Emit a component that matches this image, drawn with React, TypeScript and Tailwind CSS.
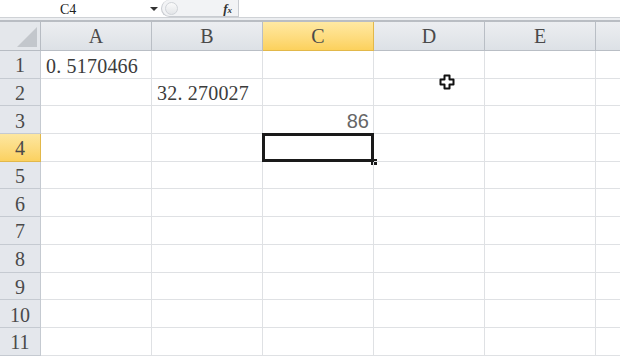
import React from "react";

const cols = ["A", "B", "C", "D", "E", ""];
const rows = [1, 2, 3, 4, 5, 6, 7, 8, 9, 10, 11];

// cell contents keyed by "col-row"
const data: Record<string, { text: string; align: "left" | "right"; sans?: boolean }> = {
  "A-1": { text: "0. 5170466", align: "left" },
  "B-2": { text: "32. 270027", align: "left" },
  "C-3": { text: "86", align: "right", sans: true },
};

function CellCursor() {
  return (
    <svg width="16" height="16" viewBox="0 0 16 16" className="absolute left-[439px] top-[74px]">
      <path
        d="M5.5 1.5h5v4h4v5h-4v4h-5v-4h-4v-5h4z"
        fill="#fff"
        stroke="#111"
        strokeWidth="2"
        strokeLinejoin="round"
      />
    </svg>
  );
}

export default function App() {
  return (
    <main className="relative w-[620px] h-[357px] overflow-hidden bg-white font-['Liberation_Serif',serif]">
      {/* Formula bar */}
      <div className="flex h-[17px] items-center bg-white">
        <div className="w-[148px] pl-[60px] text-[14px] leading-none text-[#222] pt-[3px]">C4</div>
        <div className="w-[12px] flex items-center justify-center">
          <div className="w-0 h-0 border-l-[4px] border-r-[4px] border-t-[4px] border-l-transparent border-r-transparent border-t-[#333]" />
        </div>
        <div className="ml-[1px] flex h-[17px] w-[77px] items-center rounded-l-full border-l border-b border-[#c9ccd1] bg-[#f2f3f5]">
          <div className="ml-[3px] h-[13px] w-[13px] rounded-full border border-[#d0d3d8] bg-gradient-to-b from-[#fafafa] to-[#e3e5e8]" />
          <span className="ml-auto mr-[6px] italic font-bold text-[13px] leading-none text-[#333]">
            f<span className="text-[9px]">x</span>
          </span>
        </div>
        <div className="h-full border-l border-[#c9ccd1] flex-1 bg-white" />
      </div>
      <div className="h-[5px] border-t border-[#cfd2d6] border-b-2 border-b-[#b9bdc3] bg-[#eceef1]" />

      {/* Sheet grid */}
      <div className="grid grid-cols-[41px_111px_111px_111px_111px_111px_111px] grid-rows-[29px_repeat(11,27.7px)]">
        {/* select-all corner */}
        <div className="relative border-r border-b border-[#b7bcc3] bg-[#e4e7eb]">
          <svg className="absolute right-[3px] bottom-[3px]" width="20" height="20" viewBox="0 0 20 20">
            <polygon points="20,0 20,20 0,20" fill="#c3c7cc" />
          </svg>
        </div>
        {cols.map((c) =>
          c === "C" ? (
            <div
              key={c}
              className="flex items-center justify-center border-r border-b border-[#e2b84a] bg-gradient-to-b from-[#ffe9a2] to-[#fcd15c] text-[20px] text-[#4a4a4a]"
            >
              {c}
            </div>
          ) : (
            <div
              key={c || "F"}
              className="flex items-center justify-center border-r border-b border-[#b9bec5] bg-gradient-to-b from-[#eceef1] to-[#dde1e6] text-[20px] text-[#4a4a4a]"
            >
              {c}
            </div>
          )
        )}

        {rows.map((r) => (
          <React.Fragment key={r}>
            {r === 4 ? (
              <div className="flex items-center justify-center pt-[2px] border-r border-b border-[#e2b84a] bg-gradient-to-b from-[#fde7a0] to-[#fbd15f] text-[20px] leading-none text-[#4a4a4a]">
                {r}
              </div>
            ) : (
              <div className="flex items-center justify-center pt-[2px] border-r border-b border-[#c5cad1] bg-[#e4e7ec] text-[20px] leading-none text-[#4a4a4a]">
                {r}
              </div>
            )}
            {cols.map((c) => {
              const d = data[`${c}-${r}`];
              const selected = c === "C" && r === 4;
              return (
                <div
                  key={c + r}
                  className={`relative flex items-end overflow-visible whitespace-nowrap border-r border-b border-[#dfe1e4] pb-[2px] ${
                    d?.align === "right" ? "justify-end pr-[4px]" : "justify-start pl-[5px]"
                  }`}
                >
                  {d && (
                    <span
                      className={
                        d.sans
                          ? "font-['Liberation_Sans',sans-serif] text-[20px] leading-none text-[#666]"
                          : "text-[20px] leading-none tracking-[0.2px] text-[#3c3c3c]"
                      }
                    >
                      {d.text}
                    </span>
                  )}
                  {selected && (
                    <>
                      <div className="absolute -left-[1px] -top-[1px] -right-[1px] -bottom-[1px] border-[3px] border-[#1a1a1a]" />
                      <div className="absolute -right-[4px] -bottom-[4px] h-[6px] w-[6px] bg-[#1a1a1a]" />
                    </>
                  )}
                </div>
              );
            })}
          </React.Fragment>
        ))}
      </div>

      <CellCursor />
    </main>
  );
}
